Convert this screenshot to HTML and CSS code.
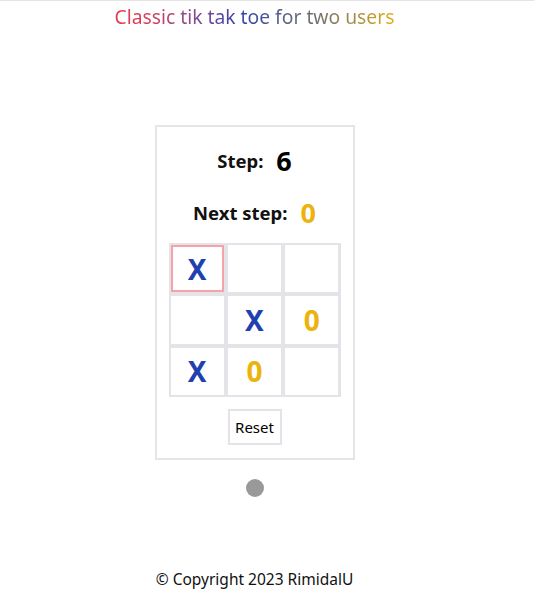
FILE: index.html
```html
<!DOCTYPE html>
<html lang="en">
<head>
<meta charset="utf-8">
<title>Tic tac toe</title>
<link rel="stylesheet" href="styles.css">
</head>
<body>
<div class="page">
  <header class="header">
    <h1 class="title">Classic tik tak toe for two users</h1>
  </header>
  <main class="main">
    <section class="card">
      <div class="info-row">
        <span class="label">Step:</span>
        <span class="value">6</span>
      </div>
      <div class="info-row">
        <span class="label">Next step:</span>
        <span class="value value-o">0</span>
      </div>
      <div class="board">
        <div class="cell cell-active cell-x">X</div>
        <div class="cell"></div>
        <div class="cell"></div>
        <div class="cell"></div>
        <div class="cell cell-x">X</div>
        <div class="cell cell-o">0</div>
        <div class="cell cell-x">X</div>
        <div class="cell cell-o">0</div>
        <div class="cell"></div>
      </div>
      <button class="reset">Reset</button>
    </section>
    <div class="dot"></div>
  </main>
  <footer class="footer">© Copyright 2023 RimidalU</footer>
</div>
</body>
</html>
```
FILE: styles.css
```css
html, body {
  margin: 0;
  padding: 0;
  background: #ffffff;
}
body {
  font-family: "Noto Sans", "Open Sans", sans-serif;
  color: #111;
  border-top: 1px solid #e4e4e4;
}
.page {
  width: 509px;
  display: flex;
  flex-direction: column;
  align-items: center;
}
.header {
  width: 100%;
  display: flex;
  justify-content: center;
}
.title {
  margin: 0;
  font-size: 19.3px;
  font-weight: 400;
  line-height: 31px;
  background: linear-gradient(90deg, #e8384c 0%, #d63e5a 12%, #8c4a8c 27%, #3542ad 45%, #56608a 60%, #7a7468 75%, #e0ad1a 100%);
  -webkit-background-clip: text;
  background-clip: text;
  color: transparent;
}
.main {
  margin-top: 93px;
  display: flex;
  flex-direction: column;
  align-items: center;
}
.card {
  width: 196px;
  border: 2px solid #e4e4ea;
  padding: 18px 0 13px;
  display: flex;
  flex-direction: column;
  align-items: center;
}
.info-row {
  display: flex;
  align-items: center;
  gap: 13px;
  height: 30px;
}
.info-row + .info-row {
  margin-top: 22px;
}
.label {
  font-size: 18.5px;
  font-weight: 700;
}
.value {
  font-size: 27px;
  font-weight: 700;
  color: #000;
}
.value-o {
  color: #ebb30b;
}
.board {
  margin-top: 16px;
  width: 172px;
  height: 154px;
  box-sizing: border-box;
  padding: 2px;
  background: #e4e4e8;
  display: grid;
  grid-template-columns: repeat(3, 1fr);
  grid-template-rows: repeat(3, 1fr);
  gap: 4px;
}
.cell {
  background: #fff;
  border: 2px solid #fff;
  display: flex;
  align-items: center;
  justify-content: center;
  font-size: 28px;
  font-weight: 700;
}
.cell-active {
  border-color: #f4a3a8;
}
.cell-x {
  color: #2140b0;
}
.cell-o {
  color: #ebb30b;
}
.reset {
  margin-top: 12px;
  width: 54px;
  height: 36px;
  padding: 0;
  background: #fff;
  border: 2px solid #e4e4e8;
  font-family: inherit;
  font-size: 15px;
  color: #000;
}
.dot {
  margin-top: 19px;
  width: 18px;
  height: 18px;
  border-radius: 50%;
  background: #999;
}
.footer {
  margin-top: 72px;
  font-size: 15.5px;
  line-height: 20px;
  color: #111;
}
```
